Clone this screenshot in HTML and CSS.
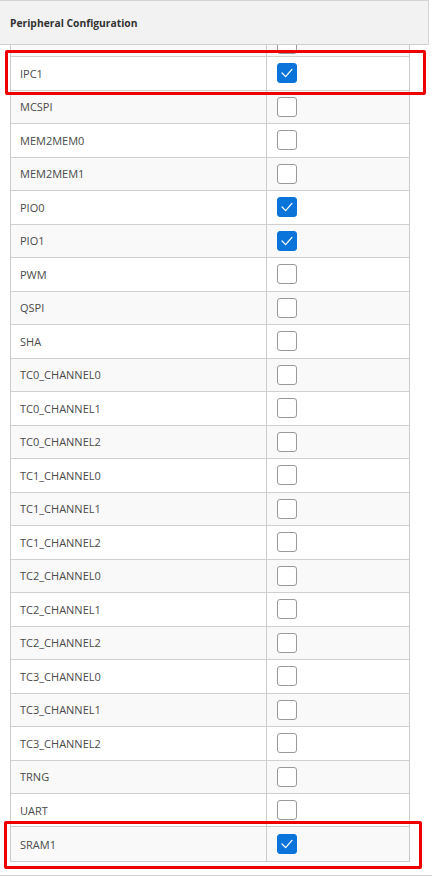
FILE: index.html
```html
<!DOCTYPE html>
<html>
<head>
<meta charset="utf-8">
<link rel="stylesheet" href="styles.css">
</head>
<body>
<div class="header">Peripheral Configuration</div>
<div class="viewport">
  <div class="rows">
    <div class="row alt"><div class="name"></div><div class="cell"><span class="cb cut"></span></div></div>
    <div class="row"><div class="name">IPC1</div><div class="cell"><span class="cb on"><svg viewBox="0 0 20 20"><polyline points="4.5,10 8.5,14 15.5,6"/></svg></span></div></div>
    <div class="row alt"><div class="name">MCSPI</div><div class="cell"><span class="cb"></span></div></div>
    <div class="row"><div class="name">MEM2MEM0</div><div class="cell"><span class="cb"></span></div></div>
    <div class="row alt"><div class="name">MEM2MEM1</div><div class="cell"><span class="cb"></span></div></div>
    <div class="row"><div class="name">PIO0</div><div class="cell"><span class="cb on"><svg viewBox="0 0 20 20"><polyline points="4.5,10 8.5,14 15.5,6"/></svg></span></div></div>
    <div class="row alt"><div class="name">PIO1</div><div class="cell"><span class="cb on"><svg viewBox="0 0 20 20"><polyline points="4.5,10 8.5,14 15.5,6"/></svg></span></div></div>
    <div class="row"><div class="name">PWM</div><div class="cell"><span class="cb"></span></div></div>
    <div class="row alt"><div class="name">QSPI</div><div class="cell"><span class="cb"></span></div></div>
    <div class="row"><div class="name">SHA</div><div class="cell"><span class="cb"></span></div></div>
    <div class="row alt"><div class="name">TC0_CHANNEL0</div><div class="cell"><span class="cb"></span></div></div>
    <div class="row"><div class="name">TC0_CHANNEL1</div><div class="cell"><span class="cb"></span></div></div>
    <div class="row alt"><div class="name">TC0_CHANNEL2</div><div class="cell"><span class="cb"></span></div></div>
    <div class="row"><div class="name">TC1_CHANNEL0</div><div class="cell"><span class="cb"></span></div></div>
    <div class="row alt"><div class="name">TC1_CHANNEL1</div><div class="cell"><span class="cb"></span></div></div>
    <div class="row"><div class="name">TC1_CHANNEL2</div><div class="cell"><span class="cb"></span></div></div>
    <div class="row alt"><div class="name">TC2_CHANNEL0</div><div class="cell"><span class="cb"></span></div></div>
    <div class="row"><div class="name">TC2_CHANNEL1</div><div class="cell"><span class="cb"></span></div></div>
    <div class="row alt"><div class="name">TC2_CHANNEL2</div><div class="cell"><span class="cb"></span></div></div>
    <div class="row"><div class="name">TC3_CHANNEL0</div><div class="cell"><span class="cb"></span></div></div>
    <div class="row alt"><div class="name">TC3_CHANNEL1</div><div class="cell"><span class="cb"></span></div></div>
    <div class="row"><div class="name">TC3_CHANNEL2</div><div class="cell"><span class="cb"></span></div></div>
    <div class="row alt"><div class="name">TRNG</div><div class="cell"><span class="cb"></span></div></div>
    <div class="row"><div class="name">UART</div><div class="cell"><span class="cb"></span></div></div>
  </div>
</div>
<div class="table2">
  <div class="row alt tall"><div class="name">SRAM1</div><div class="cell"><span class="cb on"><svg viewBox="0 0 20 20"><polyline points="4.5,10 8.5,14 15.5,6"/></svg></span></div></div>
</div>
<div class="bottom-line"></div>
<div class="mark mark1"></div>
<div class="mark mark2"></div>
</body>
</html>
```
FILE: styles.css
```css
html, body {
  margin: 0;
  padding: 0;
  background: #ffffff;
  font-family: "Open Sans", "Noto Sans", sans-serif;
}
body {
  position: relative;
  width: 432px;
  height: 880px;
  overflow: hidden;
}
.header {
  box-sizing: border-box;
  width: 429px;
  height: 45px;
  background: #f2f2f2;
  border-top: 1px solid #d4d4d4;
  border-right: 1px solid #d4d4d4;
  border-bottom: 1px solid #cfcfcf;
  padding-left: 10px;
  display: flex;
  align-items: center;
  font-weight: 700;
  font-size: 10.3px;
  color: #333333;
}
.viewport {
  box-sizing: border-box;
  margin-left: 10px;
  width: 400px;
  height: 781px;
  overflow: hidden;
  border-left: 1px solid #cccccc;
  border-right: 1px solid #cccccc;
}
.rows {
  margin-top: -21.5px;
}
.row {
  box-sizing: border-box;
  height: 33.5px;
  display: flex;
  border-bottom: 1px solid #d0d0d0;
  background: #ffffff;
}
.row.alt {
  background: #f9f9f9;
}
.name {
  box-sizing: border-box;
  width: 256px;
  border-right: 1px solid #cccccc;
  padding-left: 9px;
  display: flex;
  align-items: center;
  font-size: 11px;
  color: #4a4a4a;
}
.cell {
  flex: 1;
  display: flex;
  align-items: center;
  padding-left: 10px;
}
.cb {
  box-sizing: border-box;
  width: 20px;
  height: 20px;
  border: 1px solid #9a9a9a;
  border-radius: 3px;
  background: #ffffff;
  display: block;
}
.cb.cut {
  margin-top: 8px;
}
.cb.on {
  background: #0a74da;
  border-color: #0a74da;
}
.cb svg {
  display: block;
  width: 18px;
  height: 18px;
  fill: none;
  stroke: #ffffff;
  stroke-width: 1.4;
  stroke-linecap: round;
  stroke-linejoin: round;
}
.table2 {
  box-sizing: border-box;
  margin-left: 10px;
  width: 400px;
  border: 1px solid #cccccc;
}
.row.tall {
  height: 34px;
  border-bottom: none;
}
.bottom-line {
  margin-top: 13px;
  height: 1px;
  background: #cfcfcf;
}
.mark {
  position: absolute;
  box-sizing: border-box;
  border: 3px solid #ee0000;
  border-radius: 2px;
}
.mark1 {
  left: 5px;
  top: 50px;
  width: 421px;
  height: 45px;
}
.mark2 {
  left: 4px;
  top: 821px;
  width: 418px;
  height: 48px;
}
```
